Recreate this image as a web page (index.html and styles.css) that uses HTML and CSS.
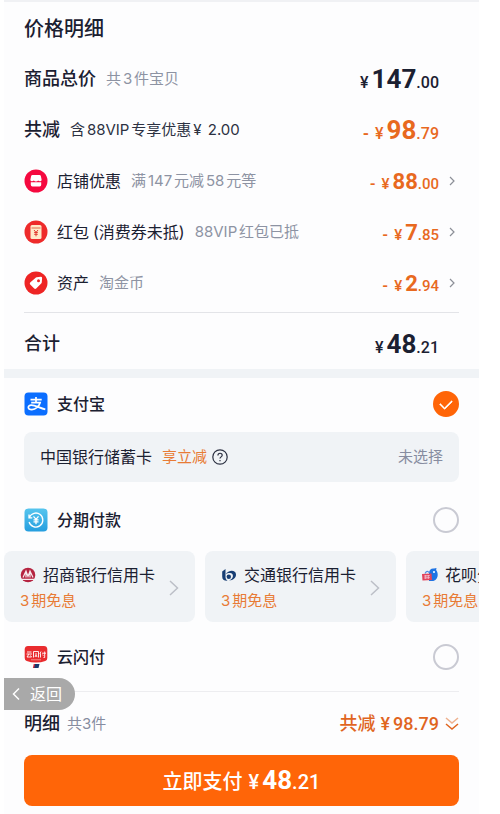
FILE: index.html
```html
<!DOCTYPE html>
<html lang="zh-CN">
<head>
<meta charset="utf-8">
<meta name="viewport" content="width=device-width, initial-scale=1">
<title>价格明细</title>
<link rel="stylesheet" href="styles.css">
</head>
<body>
<main class="sheet">
  <section class="prices">
    <h1 class="title">价格明细</h1>
    <div class="row">
      <span class="name">商品总价</span><span class="note">共3件宝贝</span>
      <span class="amount big"><span class="yen">¥</span><b>147</b>.00</span>
    </div>
    <div class="row">
      <span class="name">共减</span><span class="note dark">含88VIP专享优惠<span class="wide">¥</span> 2.00</span>
      <span class="amount big off"><span class="minus">-</span><span class="yen">¥</span><b>98</b>.79</span>
    </div>
    <a class="row" href="#shop">
      <svg class="icon" viewBox="0 0 24 24"><circle cx="12" cy="12" r="11.5" fill="#f5093f"/><path d="M8.500 6h7q1.200 0 1.400 1.200l.7 3.300q.2 1.500-1.200 1.700-1.500.2-2.200-.8-1 1-2.200 1-1.200 0-2.200-1-.7 1-2.200.8-1.400-.2-1.200-1.700l.7-3.300Q7.300 6 8.500 6z" fill="#fff"/><path d="M6.800 13.200h10.400v2.600q0 1.600-1.600 1.600H8.400q-1.600 0-1.600-1.600z" fill="#fff"/></svg>
      <span class="item">店铺优惠</span><span class="note">满147元减58元等</span>
      <span class="amount off"><span class="minus">-</span><span class="yen">¥</span><b>88</b>.00</span>
      <svg class="more" viewBox="0 0 6 10"><path d="M1 1l4 4-4 4"/></svg>
    </a>
    <a class="row" href="#redpacket">
      <svg class="icon" viewBox="0 0 24 24"><circle cx="12" cy="12" r="11.500" fill="#ee2b2b"/><rect x="6.500" y="5" width="11" height="14" rx="1.500" fill="#ffe9c9"/><path d="M7.500 8h9" stroke="#e06a4a" stroke-width="1"/><path d="M10 10l2 2.400 2-2.400M12 12v4.300M10.200 12.500h3.600M10.200 14.300h3.600" stroke="#e23a2e" fill="none"/></svg>
      <span class="item">红包<span class="paren">(消费券未抵)</span></span><span class="note">88VIP红包已抵</span>
      <span class="amount off"><span class="minus">-</span><span class="yen">¥</span><b>7</b>.85</span>
      <svg class="more" viewBox="0 0 6 10"><path d="M1 1l4 4-4 4"/></svg>
    </a>
    <a class="row" href="#assets">
      <svg class="icon" viewBox="0 0 24 24"><circle cx="12" cy="12" r="11.500" fill="#ee2424"/><path d="M12.700 6.300l4-.5q1.400-.1 1.400 1.300l-.3 4.200q-.1.700-.6 1.200l-5 5q-1 .9-2 0l-4-4q-.9-1 0-2l5.200-4.600q.5-.5 1.300-.6z" fill="#fff"/><circle cx="14.500" cy="9.700" r="1.500" fill="#ee2424"/></svg>
      <span class="item">资产</span><span class="note">淘金币</span>
      <span class="amount off"><span class="minus">-</span><span class="yen">¥</span><b>2</b>.94</span>
      <svg class="more" viewBox="0 0 6 10"><path d="M1 1l4 4-4 4"/></svg>
    </a>
    <div class="row total">
      <span class="name">合计</span>
      <span class="amount big"><span class="yen">¥</span><b>48</b>.21</span>
    </div>
  </section>

  <section class="methods">
    <label class="method">
      <svg class="icon" viewBox="0 0 24 24"><rect x=".5" y=".5" width="23" height="23" rx="4" fill="#0b6eff"/><path d="M6.500 7.600h11.200M12 5v5.600M7.200 10.700h8.900c-1 3.300-4.400 7-8.200 7-4.700 0-4.600-4.500-.6-4.500 4 0 8 2.700 14 4.200" fill="none" stroke="#fff" stroke-width="1.700"/></svg>
      <span class="item">支付宝</span>
      <input class="pick" type="radio" name="pay" checked>
    </label>
    <button class="bank" type="button">
      <span>中国银行储蓄卡</span><span class="promo">享立减</span>
      <svg class="help" viewBox="0 0 16 16"><circle cx="8" cy="8" r="7.200"/><path d="M5.900 6.500c0-3 4.300-2.900 4.300-.3 0 1.700-2.200 1.700-2.200 3.400M8 10.900v1.300"/></svg>
      <span class="state">未选择</span>
    </button>
    <label class="method split">
      <svg class="icon" viewBox="0 0 24 24"><defs><linearGradient id="sky" x2="0" y2="1"><stop stop-color="#56c5ee"/><stop offset="1" stop-color="#259edf"/></linearGradient></defs><rect x=".5" y=".5" width="23" height="23" rx="4" fill="url(#sky)"/><path d="M5.300 9.500a7 7 0 1 1-.2 4.500M5 6.500v3.300h3.300" fill="none" stroke="#fff" stroke-width="1.300"/><path d="M9.500 8.300l2.500 3 2.500-3M12 11.300v4.900M9.500 11.800h5M9.500 13.900h5" fill="none" stroke="#fff" stroke-width="1.300"/></svg>
      <span class="item">分期付款</span>
      <input class="pick" type="radio" name="pay">
    </label>
    <div class="plans">
      <button class="plan" type="button">
        <span class="plan-name"><svg class="logo" viewBox="0 0 16 16"><circle cx="8" cy="8" r="7.300" fill="#b52340"/><path d="M1 12.300h14M3 10.500L6 4l2 5.500L10 4l3 6.500M6 5v5.500M10 5v5.500" fill="none" stroke="#f7e9ed" stroke-width="1.200"/></svg>招商银行信用卡</span>
        <span class="promo">3期免息</span>
        <svg class="go" viewBox="0 0 10 16"><path d="M1 1l7.500 7L1 15"/></svg>
      </button>
      <button class="plan" type="button">
        <span class="plan-name"><svg class="logo" viewBox="0 0 16 16"><path d="M1.200 4.500L4.500 2v8.500q0 2 2 3.300-5.300.2-5.300-4.300z" fill="#173e74"/><path d="M4.800 7.200C7 2.800 15 2.300 15 7.500c0 4.300-4 6-7 5.700 5-.8 5.200-7.200 1-7.200-2 0-3.200.5-4.200 1.200z" fill="#173e74"/><circle cx="7.800" cy="9.800" r="2.200" fill="#173e74"/></svg>交通银行信用卡</span>
        <span class="promo">3期免息</span>
        <svg class="go" viewBox="0 0 10 16"><path d="M1 1l7.500 7L1 15"/></svg>
      </button>
      <button class="plan" type="button">
        <span class="plan-name"><svg class="logo" viewBox="0 0 16 16"><path d="M7 6c0-3 2.300-5 5-4.500l2.500-.5-.4 2c3.200 4 1.500 11-4.100 11H7z" fill="#1f74e4"/><circle cx="12" cy="5" r="1" fill="#fff"/><path d="M3 6.500Q5 2.500 7.500 6" fill="none" stroke="#4f8be0" stroke-width="1.200"/><path d="M0 7l9.500-.6.500 6.600-9.500.5z" fill="#e2435b"/><path d="M2 9l5.800-.4M2 11l5.800-.4M3.700 8v4M6.300 8v4" fill="none" stroke="#f3c5d4" stroke-width=".8"/></svg>花呗分期</span>
        <span class="promo">3期免息</span>
        <svg class="go" viewBox="0 0 10 16"><path d="M1 1l7.500 7L1 15"/></svg>
      </button>
    </div>
    <label class="method quick">
      <svg class="icon" viewBox="0 0 24 24"><path d="M4 1h16q3 0 3.300 3v9q0 2.300-2 3-4 1.500-9.300 1.500T2.700 16q-2-.7-2-3V4Q1 1 4 1z" fill="#e92c2f"/><path d="M3 7h4.500M2.500 9h5.500M5 9l-2 3h4.500l-1-1.500M9.500 6.500v6M9.500 6.500h5v6M12 8v2l-1 2M12 10l1 2M17 6.500l-1.200 2.500M16.500 8.500v4M18 8.200h4M20.700 6.500v6h-1.200M18.600 9.700l.7 1" fill="none" stroke="#fff" stroke-width=".9"/><path d="M7 14.800h10" stroke="#f6a5a2" stroke-width=".8"/><path d="M9.700 19h4l-1 4H8.900z" fill="#d62a3c"/><path d="M11 19h4.500l-1 4h-4.300z" fill="#17386e"/></svg>
      <span class="item">云闪付</span>
      <input class="pick" type="radio" name="pay">
    </label>
  </section>

  <footer class="checkout">
    <button class="back" type="button"><svg viewBox="0 0 8 14"><path d="M7 1.500L1.500 7 7 12.500"/></svg>返回</button>
    <div class="summary">
      <span class="name">明细</span><span class="count">共3件</span>
      <a class="saved" href="#detail">共减<span class="figure"><span class="yen">¥</span>98.79</span>
        <svg viewBox="0 0 14 14"><path d="M1 1l6 5 6-5" opacity=".5"/><path d="M1 7l6 5 6-5"/></svg></a>
    </div>
    <button class="pay" type="button">立即支付<span class="figure"><span class="yen">¥</span><b>48</b>.21</span></button>
  </footer>
</main>
</body>
</html>
```
FILE: styles.css
```css
* { box-sizing: border-box; }

body {
  margin: 0;
  padding: 0 21px 0 4px;
  background: #fff;
  color: #1b2031;
  font: 16px/24px Inter, "Noto Sans CJK SC", sans-serif;
  text-autospace: normal;
}

button {
  border: 0;
  padding: 0;
  color: inherit;
  font: inherit;
  text-align: left;
}

a { color: inherit; text-decoration: none; }

svg { flex: none; }

.sheet {
  padding-bottom: 8px;
  border-top: 2px solid #f0f1f4;
  background: #fdfdfe;
}

.prices {
  padding: 0 20px;
  border-bottom: 9px solid #f0f3f6;
}

.title {
  margin: 0;
  padding-top: 3px;
  font-size: 20px;
  font-weight: 500;
  line-height: 48px;
}

.row {
  display: flex;
  align-items: center;
  height: 51px;
  padding-right: 20px;
}

a.row { padding-right: 4px; }

.name { font-size: 18px; font-weight: 500; }

.note {
  margin-left: 10px;
  color: #8d93a3;
  font-size: 15px;
}

.note.dark { color: #2c3142; }
.wide { margin: 0 2px; }

.icon { width: 24px; height: 24px; margin-right: 9px; }

.paren { margin-left: 4px; }

.amount, .figure {
  font-family: Roboto, "Noto Sans CJK SC", sans-serif;
  font-weight: 500;
}

.amount {
  margin-left: auto;
  padding-top: 4px;
  font-size: 15px;
  white-space: nowrap;
}

.amount b { font-size: 22px; }
.amount.big { font-size: 16px; }
.amount.big b { font-size: 26px; }
.off { color: #e8691f; }
.minus { margin-right: 6px; font-weight: 700; }
.yen { margin-right: 3px; }

.more {
  width: 6px;
  height: 10px;
  margin-left: 10px;
}

.more path, .go path, .back path, .saved path, .help * {
  fill: none;
  stroke: #8c8f98;
  stroke-width: 1.2;
}

.total {
  height: 57px;
  margin-top: 4px;
  padding-top: 5px;
  border-top: 1px solid #e3e4e8;
}

.method {
  display: flex;
  align-items: center;
  height: 52px;
  padding: 0 20px;
}

.method .item { font-weight: 500; }
.method.split { height: 62px; margin-top: 7px; }
.method.quick { height: 69px; }

.pick {
  display: grid;
  place-items: center;
  width: 26px;
  height: 26px;
  margin: 0 0 0 auto;
  border: 2px solid #c9cad3;
  border-radius: 50%;
  appearance: none;
}

.pick:checked { border-color: #ff6508; background: #ff6508; }

.pick:checked::after {
  content: "";
  width: 10px;
  height: 6px;
  margin-bottom: 3px;
  border: solid #fff;
  border-width: 0 0 2px 2px;
  border-radius: 1px;
  transform: rotate(-45deg);
}

.bank {
  display: flex;
  align-items: center;
  width: calc(100% - 40px);
  height: 50px;
  margin: 2px 20px 0;
  padding: 0 16px;
  border-radius: 8px;
  background: #f0f3f6;
}

.promo { color: #e87b35; font-size: 15px; }
.bank .promo { margin-left: 10px; }
.help { width: 16px; height: 16px; margin-left: 5px; }
.help * { stroke: #2c3142; }
.state { margin-left: auto; color: #868ca0; font-size: 15px; }

.plans {
  display: flex;
  gap: 10px;
  overflow: hidden;
}

.plan {
  display: grid;
  grid-template-columns: 1fr auto;
  align-content: center;
  align-items: center;
  row-gap: 2px;
  flex: none;
  width: 191px;
  height: 71px;
  padding: 3px 16px 0;
  border-radius: 8px;
  background: #f0f3f6;
}

.plan-name { display: flex; align-items: center; white-space: nowrap; }
.logo { width: 16px; height: 16px; margin-right: 7px; }

.go {
  grid-area: 1 / 2 / 3 / 3;
  width: 10px;
  height: 16px;
}

.go path { stroke: #bcbfc7; stroke-width: 1.5; }

.checkout { position: relative; padding: 0 20px; }

.back {
  position: absolute;
  top: -13px;
  left: 0;
  display: flex;
  align-items: center;
  gap: 10px;
  height: 32px;
  padding: 0 13px 0 8px;
  border-radius: 0 16px 16px 0;
  background: #a9a9a9;
  color: #fff;
}

.back svg { width: 8px; height: 14px; }
.back path { stroke: #fff; stroke-width: 1.5; }

.summary {
  display: flex;
  align-items: center;
  height: 64px;
  border-top: 1px solid #ededf0;
}

.count { margin-left: 7px; color: #868ca0; font-size: 15px; text-autospace: no-autospace; }

.saved {
  display: flex;
  align-items: center;
  margin-left: auto;
  color: #e0651f;
  font-size: 18px;
  font-weight: 500;
}

.saved .figure { margin-left: 5px; }
.saved svg { width: 14px; height: 14px; margin-left: 6px; }
.saved path { stroke: #e0651f; stroke-width: 1.5; }

.pay {
  display: flex;
  align-items: baseline;
  justify-content: center;
  width: 100%;
  height: 51px;
  border-radius: 8px;
  background: #ff6508;
  color: #fff;
  font-size: 20px;
  font-weight: 500;
  line-height: 51px;
}

.pay .figure { margin-left: 6px; }
.pay b { font-size: 26px; }
```
